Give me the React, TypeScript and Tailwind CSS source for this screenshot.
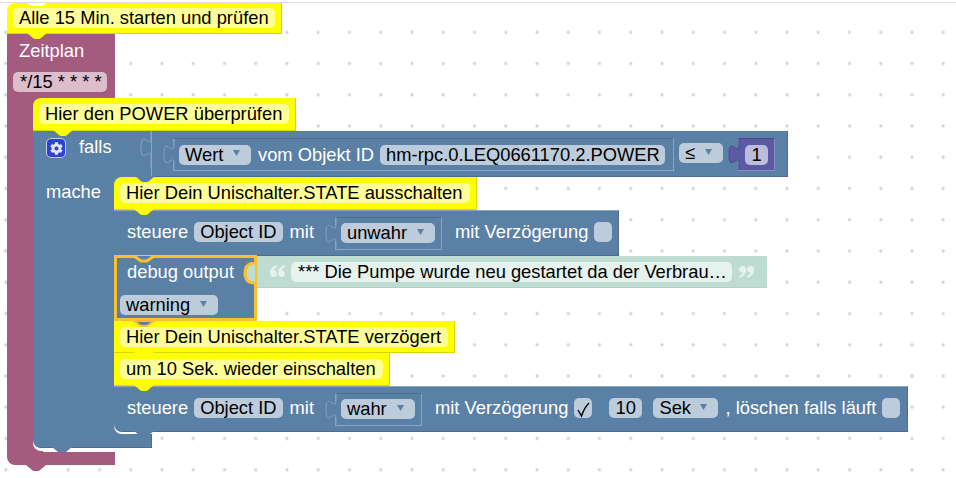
import React from "react";
import { FaCog } from "react-icons/fa";

const BLUE = "#5b80a5";
const PURPLE = "#a55b80";
const YELLOW = "#ffff00";

// little connector that sticks out under a block
function Tab({ color, left = 20 }: { color: string; left?: number }) {
  return (
    <svg className="absolute top-full z-10" style={{ left }} width="20" height="6">
      <path d="M0 0 L6 5 Q7 6 8 6 H12 Q13 6 14 5 L20 0 Z" fill={color} />
    </svg>
  );
}

function Socket({ fill = BLUE, stroke = "#86a0bb" }: { fill?: string; stroke?: string }) {
  return (
    <svg className="absolute top-0 -left-[11px]" width="12" height="31">
      <path d="M11 0 V6 C11 18.5 1 -4 1 15.4 S11 12.4 11 24.8 V31" fill={fill} stroke={stroke} strokeWidth="1" />
    </svg>
  );
}

function Arrow() {
  return (
    <svg className="ml-[9px] mr-[5px] mt-[-3px]" width="7" height="6">
      <path d="M0 0 H7 L3.5 6 Z" fill={BLUE} />
    </svg>
  );
}

function Pill({ children, className = "" }: { children: React.ReactNode; className?: string }) {
  return (
    <div className={`flex h-[20px] items-center whitespace-nowrap rounded-[5px] bg-[#bdccdb] px-[6px] text-black ${className}`}>
      {children}
    </div>
  );
}

function Dropdown({ label, className = "" }: { label: string; className?: string }) {
  return (
    <Pill className={`justify-between ${className}`}>
      {label}
      <Arrow />
    </Pill>
  );
}

function Inset({ children, className = "" }: { children: React.ReactNode; className?: string }) {
  return (
    <div className={`relative flex items-center border border-[#8ca6c0] border-t-[#4a6d90] ${className}`}>
      <Socket />
      {children}
    </div>
  );
}

function Comment({ text, width, height = 32, first, dip }: {
  text: string;
  width: number;
  height?: number;
  first?: boolean;
  dip?: boolean;
}) {
  return (
    <div
      className={`relative flex items-center border-b border-r border-[#d8d800] bg-[#ffff00] pl-[6px] text-black ${first ? "rounded-tl-[8px]" : ""}`}
      style={{ width, height }}
    >
      {dip && (
        <svg className="absolute left-[20px] top-0" width="20" height="4">
          <path d="M0 0 L5 3 H15 L20 0 Z" fill="#fff" />
        </svg>
      )}
      <div className="mr-[6px] flex h-[20px] flex-1 items-center whitespace-nowrap rounded-[5px] bg-[#ffff99] pl-[6px]">{text}</div>
      <Tab color={YELLOW} />
    </div>
  );
}

function Quote({ close }: { close?: boolean }) {
  const mark = "M7 0 C3 1 0 4 0 8 C0 10.5 1.5 12 3.5 12 C5.5 12 7 10.5 7 8.5 C7 6.5 5.5 5.5 3.5 5.5 C4 3.5 5.5 2.5 7 2 Z";
  return (
    <svg width="15" height="13" className={close ? "rotate-180" : ""}>
      <path d={mark} fill="#e6f2ee" />
      <path d={mark} fill="#e6f2ee" transform="translate(8 0)" />
    </svg>
  );
}

function Steuere({ value, inputWidth, children, width, rounded }: {
  value: string;
  inputWidth: number;
  children: React.ReactNode;
  width: number;
  rounded?: boolean;
}) {
  return (
    <div
      className={`relative flex h-[46px] items-center border-b border-r border-t border-[#4a6d90] border-t-[#8ca6c0] bg-[#5b80a5] pb-[2px] pl-[13px] ${rounded ? "rounded-bl-[8px] shadow-[0_2px_0_#fff]" : ""}`}
      style={{ width }}
    >
      <span className="text-white">steuere</span>
      <Pill className="ml-[6px]">Object ID</Pill>
      <span className="ml-[7px] text-white">mit</span>
      <Inset className="ml-[21px] mt-[2px] h-[33px] pl-[5px] pr-[6px]">
        <div style={{ width: inputWidth }}>
          <Dropdown label={value} />
        </div>
      </Inset>
      {children}
      <Tab color={BLUE} left={20} />
    </div>
  );
}

export default function App() {
  return (
    <div className="h-[478px] w-[956px] overflow-hidden bg-white pt-[2px] font-['Liberation_Sans',sans-serif] text-[18.33px] leading-[20px]">
      <div className="relative h-[476px] border-t border-[#dedede]">
        <svg className="absolute inset-0" width="956" height="475">
          <defs>
            <pattern id="dots" x="-9.875" y="-17.625" width="31.25" height="31.25" patternUnits="userSpaceOnUse">
              <circle cx="15.625" cy="15.625" r="1.6" fill="#d2d2d2" />
            </pattern>
          </defs>
          <rect width="956" height="475" y="10" fill="url(#dots)" />
        </svg>

        <div className="absolute left-[7px] top-0 flex w-fit flex-col">
          <Comment text="Alle 15 Min. starten und prüfen" width={275} height={31} first dip />

          {/* Zeitplan */}
          <div className="flex h-[64px] w-[108px] flex-col bg-[#a55b80] pl-[6px] pt-[7px] text-white">
            <div className="pl-[6px]">Zeitplan</div>
            <div className="mt-[11px] flex h-[20px] w-[94px] items-center rounded-[5px] bg-[#dbbdcc] pl-[7px] text-black">*/15 * * * *</div>
          </div>

          <div className="relative flex">
            <div className="w-[26px] bg-[#a55b80]" />
            <div className="relative flex flex-col pb-[4px]">
              <div className="absolute left-0 top-0 h-[10px] w-[10px] bg-[#a55b80]" />
              <div className="absolute bottom-0 left-0 h-[14px] w-[10px] bg-[#a55b80]" />
              <Comment text="Hier den POWER überprüfen" width={263} height={33} first />

              {/* falls */}
              <div className="relative flex h-[46px] w-[755px] items-start border-b border-r border-[#4a6d90] bg-[#5b80a5]">
                <div className="relative flex h-[46px] w-[119px] shrink-0 border-r border-[#8ca6c0] bg-[#5b80a5] pl-[13px] pt-[7px] text-white">
                  <div className="flex h-[20px] w-[20px] items-center justify-center rounded-[5px] border border-[#c4d2e0] bg-[#2f3fe0] text-[13px] text-[#dfe6f5]">
                    <FaCog />
                  </div>
                  <span className="ml-[13px] mt-[-1px]">falls</span>
                  <svg className="absolute right-[-1px] top-[1px]" width="12" height="36">
                    <path d="M11 0 V6 C11 18.5 1 -4 1 15.4 S11 12.4 11 24.8 V36" fill="#5b80a5" stroke="#8ca6c0" />
                  </svg>
                </div>
                <Inset className="ml-[21px] mt-[7px] h-[33px] w-[501px] pl-[5px]">
                  <Dropdown label="Wert" className="w-[72px]" />
                  <span className="ml-[7px] whitespace-nowrap text-white">vom Objekt ID</span>
                  <Pill className="ml-[6px] w-[285px]">hm-rpc.0.LEQ0661170.2.POWER</Pill>
                </Inset>
                <Dropdown label="≤" className="ml-[5px] mt-[12px] w-[44px]" />
                <div className="relative ml-[15px] mt-[7px] flex h-[33px] w-[37px] items-center justify-center border border-[#8c8cc0] border-t-[#49498c] bg-[#5b5ba5]">
                  <Socket fill="#5b5ba5" stroke="#49498c" />
                  <div className="flex h-[20px] w-[23px] items-center justify-center rounded-[5px] bg-[#bdbddb] text-black">1</div>
                </div>
                <Tab color={BLUE} left={102} />
              </div>

              {/* mache */}
              <div className="relative flex">
                <div className="w-[81px] bg-[#5b80a5] pl-[13px] pt-[5px] text-white">mache</div>
                <div className="relative flex flex-col pb-[2px]">
                  <div className="absolute left-0 top-0 h-[10px] w-[10px] bg-[#5b80a5]" />
                  <div className="absolute bottom-0 left-0 h-[14px] w-[10px] bg-[#5b80a5]" />
                  <Comment text="Hier Dein Unischalter.STATE ausschalten" width={363} height={33} first />
                  <Steuere value="unwahr" inputWidth={94} width={505}>
                    <span className="ml-[13px] whitespace-nowrap text-white">mit Verzögerung</span>
                    <div className="ml-[6px] h-[20px] w-[18px] rounded-[5px] bg-[#bdccdb]" />
                  </Steuere>

                  {/* debug + string */}
                  <div className="relative z-20 -mt-[1px] flex items-start">
                    <div className="relative h-[66px] w-[143px] border-[3px] border-[#fbc02d] bg-[#5b80a5] pl-[10px] pt-[4px] text-white">
                      <svg className="absolute left-[16px] -top-[3px]" width="22" height="9">
                        <path d="M1 1 L8 6 H14 L21 1" fill="#5b80a5" stroke="#fbc02d" strokeWidth="3" />
                      </svg>
                      <div className="whitespace-nowrap">debug output</div>
                      <Dropdown label="warning" className="-ml-[7px] mt-[13px] w-[98px]" />
                      <svg className="absolute -right-[3px] top-[4px]" width="14" height="24">
                        <path d="M12 1 C6 1 2 4 2 11 S6 21 12 21" fill="#bfdcd2" stroke="#fbc02d" strokeWidth="3" />
                      </svg>
                      <svg className="absolute left-[16px] top-full z-10 mt-[3px]" width="22" height="7">
                        <path d="M1 0 L8 5 H14 L21 0 Z" fill="#5b80a5" stroke="#fbc02d" strokeWidth="2" />
                      </svg>
                    </div>
                    <div className="mt-[1px] flex h-[32px] w-[510px] items-center border-b border-[#b0d2c6] bg-[#bfdcd2] pl-[13px]">
                      <Quote />
                      <div className="ml-[6px] flex h-[20px] w-[441px] items-center whitespace-nowrap rounded-[5px] bg-[#e6f2ee] pl-[7px] text-black">
                        *** Die Pumpe wurde neu gestartet da der Verbrau…
                      </div>
                      <div className="ml-[7px]"><Quote close /></div>
                    </div>
                  </div>

                  <Comment text="Hier Dein Unischalter.STATE verzögert" width={341} />
                  <Comment text="um 10 Sek. wieder einschalten" width={276} height={33} />
                  <Steuere value="wahr" inputWidth={74} width={794} rounded>
                    <span className="ml-[13px] whitespace-nowrap text-white">mit Verzögerung</span>
                    <div className="ml-[6px] flex h-[20px] w-[18px] items-center justify-center rounded-[5px] bg-[#bdccdb]">
                      <svg width="18" height="20">
                        <path d="M4 12 L7.5 18 C9.5 12 12 8 15 5" fill="none" stroke="#000" strokeWidth="1.4" />
                      </svg>
                    </div>
                    <Pill className="ml-[17px] w-[33px]">10</Pill>
                    <Dropdown label="Sek" className="ml-[11px] w-[65px]" />
                    <span className="ml-[7px] whitespace-nowrap text-white">, löschen falls läuft</span>
                    <div className="ml-[6px] h-[20px] w-[18px] rounded-[5px] bg-[#bdccdb]" />
                  </Steuere>
                </div>
              </div>

              {/* falls foot */}
              <div className="relative z-0 h-[14px] w-[119px] rounded-bl-[8px] border-b border-r border-[#4a6d90] bg-[#5b80a5] shadow-[0_3px_0_#fff]">
                <Tab color={BLUE} left={19} />
              </div>
            </div>
          </div>

          {/* Zeitplan foot */}
          <div className="relative h-[13px] w-[108px] rounded-bl-[8px] bg-[#a55b80]">
            <Tab color={PURPLE} left={19} />
          </div>
        </div>
      </div>
    </div>
  );
}
